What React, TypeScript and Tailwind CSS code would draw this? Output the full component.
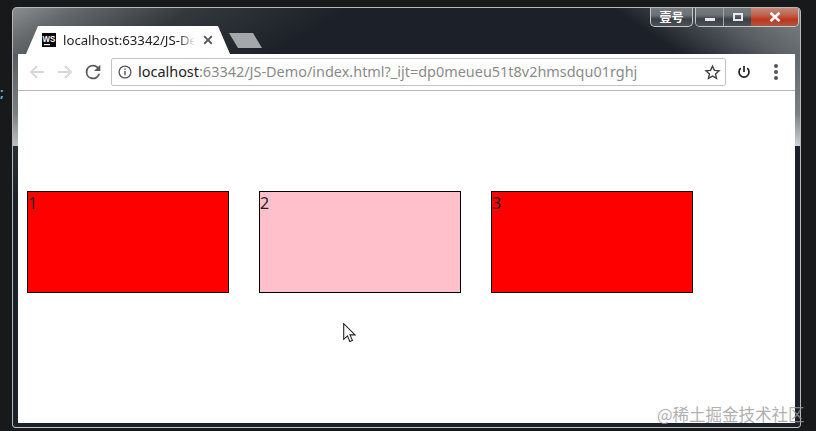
import React from "react";

function Box({ n, color }: { n: number; color: string }) {
  return (
    <div className={`w-[202px] h-[102px] border border-black text-[16px] leading-[22px] text-[#222] ${color}`}>
      {n}
    </div>
  );
}

export default function App() {
  return (
    <div className="relative w-[816px] h-[431px] overflow-hidden bg-[#17191a] pt-[7px] pl-[12px] font-['Noto_Sans',sans-serif]">
      <div className="absolute left-0 top-[85px] text-[#5fb4e6] text-[13px] leading-[14px] font-bold">;</div>

      <div className="relative flex flex-col w-[789px] h-[421px] rounded-t-[5px] rounded-b-[4px] border border-[#b4b8bb] border-b-[#c5c8ca] px-[5px] pb-[4px] overflow-hidden bg-[linear-gradient(150deg,#8a8e90_0px,#666a6d_30px,#33383d_90px,transparent_170px),linear-gradient(214deg,#7f8487_0px,#5a6064_50px,transparent_105px),linear-gradient(#1c2129,#1c2129)]">
        <div className="absolute left-0 top-[46px] w-[5px] h-[92px] bg-[linear-gradient(180deg,#585c5f_0%,#7c7f81_65%,#bfc1c2_100%)]" />
        <div className="absolute right-0 top-[46px] w-[5px] h-[92px] bg-[linear-gradient(180deg,#62676b_0%,#7c7f81_65%,#cfd1d2_100%)]" />

        {/* tab strip */}
        <div className="relative flex items-end h-[46px] shrink-0 pl-[8px]">
          <div className="flex items-center w-[204px] h-[28px] pl-[16px] gap-[7px] bg-white [clip-path:polygon(0_100%,12px_0,192px_0,100%_100%)]">
            <svg width="14" height="14" viewBox="0 0 14 14" className="shrink-0">
              <rect width="14" height="14" fill="#000" />
              <rect x="2" y="11" width="6" height="1.2" fill="#fff" />
              <text x="0.6" y="8.6" fontSize="8.4" fontWeight="700" fill="#fff" textLength="12.8" lengthAdjust="spacingAndGlyphs" fontFamily="Liberation Sans">WS</text>
            </svg>
            <div className="w-[132px] overflow-hidden whitespace-nowrap text-[13.2px] leading-[18px] text-[#222] [mask-image:linear-gradient(90deg,#000_88%,transparent)]">
              localhost:63342/JS-Demo
            </div>
            <svg width="10" height="10" viewBox="0 0 10 10" className="ml-[1px] shrink-0">
              <path d="M1.2 1.2 8.8 8.8M8.8 1.2 1.2 8.8" stroke="#555" strokeWidth="1.8" />
            </svg>
          </div>
          <div className="mb-[6px] ml-[-1px] w-[33px] h-[15px] bg-[#a5a8aa] [clip-path:polygon(0_0,24px_0,100%_100%,9px_100%)]" />
        </div>

        {/* toolbar */}
        <div className="relative flex items-center h-[37px] shrink-0 bg-white border-b border-[#b4b6b8] pl-[10px]">
          <svg width="18" height="18" viewBox="0 0 18 18" fill="none" stroke="#d8d8d8" strokeWidth="1.8">
            <path d="M16 9H3M9 3 3 9l6 6" />
          </svg>
          <svg width="18" height="18" viewBox="0 0 18 18" fill="none" stroke="#d8d8d8" strokeWidth="1.8" className="ml-[10px]">
            <path d="M2 9h13M9 3l6 6-6 6" />
          </svg>
          <svg width="22" height="22" viewBox="0 0 24 24" fill="#5a5a5a" className="ml-[8px]">
            <path d="M17.65 6.35A7.96 7.96 0 0 0 12 4a8 8 0 1 0 7.75 10h-2.08A6 6 0 1 1 12 6c1.66 0 3.14.69 4.22 1.78L13 11h7V4l-2.35 2.35z" />
          </svg>
          <div className="flex items-center ml-[7px] w-[615px] h-[28px] rounded-[2px] border border-[#c2c2c2] pl-[6px] pr-[4px]">
            <svg width="14" height="14" viewBox="0 0 14 14" fill="none" className="shrink-0">
              <circle cx="7" cy="7" r="5.9" stroke="#555" strokeWidth="1.3" />
              <rect x="6.3" y="6" width="1.4" height="4.2" fill="#555" />
              <rect x="6.3" y="3.6" width="1.4" height="1.4" fill="#555" />
            </svg>
            <div className="ml-[6px] whitespace-nowrap text-[14.45px] leading-[20px] text-[#8a8a8a]">
              <span className="text-[#222]">localhost</span>:63342/JS-Demo/index.html?_ijt=dp0meueu51t8v2hmsdqu01rghj
            </div>
            <svg width="17" height="17" viewBox="0 0 24 24" fill="none" stroke="#444" strokeWidth="2" className="ml-auto">
              <path d="M12 3l2.7 6 6.5.7-4.9 4.3 1.4 6.4L12 17.1 6.3 20.4l1.4-6.4-4.9-4.3 6.5-.7z" />
            </svg>
          </div>
          <svg width="14" height="14" viewBox="0 0 14 14" fill="none" stroke="#222" strokeWidth="1.7" className="ml-[11px]">
            <path d="M7 1v6" />
            <path d="M3.8 3.2a5 5 0 1 0 6.4 0" />
          </svg>
          <div className="ml-[23px] flex flex-col gap-[2.5px]">
            <span className="block w-[3.5px] h-[3.5px] rounded-full bg-[#555]" />
            <span className="block w-[3.5px] h-[3.5px] rounded-full bg-[#555]" />
            <span className="block w-[3.5px] h-[3.5px] rounded-full bg-[#555]" />
          </div>
        </div>

        {/* page */}
        <div className="relative flex-1 bg-white pt-[100px] pl-[9px]">
          <div className="flex gap-[30px]">
            <Box n={1} color="bg-[#ff0000]" />
            <Box n={2} color="bg-[#ffc0cb]" />
            <Box n={3} color="bg-[#ff0000]" />
          </div>
        </div>

        {/* window controls */}
        <div className="absolute top-0 right-[1px] flex gap-[2px] h-[19px]">
          <div className="flex items-center justify-center w-[43px] h-[19px] rounded-b-[5px] border border-t-0 border-[#c4c8ca] bg-[linear-gradient(180deg,#777c80_0%,#6a7074_40%,#3a4045_62%,#4c5256_100%)] text-[12px] leading-[14px] font-bold text-white font-['Noto_Sans_CJK_SC',sans-serif]">
            壹号
          </div>
          <div className="flex h-[19px] rounded-b-[5px] border border-t-0 border-[#c4c8ca] overflow-hidden">
            <div className="flex items-center justify-center w-[28px] border-r border-[#a0a5a8] bg-[linear-gradient(180deg,#777c80_0%,#6a7074_40%,#3a4045_62%,#4c5256_100%)]">
              <span className="block w-[10px] h-[3px] mt-[5px] bg-[#e8e8e8]" />
            </div>
            <div className="flex items-center justify-center w-[27px] bg-[linear-gradient(180deg,#777c80_0%,#6a7074_40%,#3a4045_62%,#4c5256_100%)]">
              <span className="block w-[10px] h-[8px] border-2 border-[#e8e8e8]" />
            </div>
            <div className="flex items-center justify-center w-[47px] bg-[linear-gradient(180deg,#c48a7c_0%,#c0604a_40%,#c2341a_65%,#a85a48_100%)]">
              <svg width="12" height="10" viewBox="0 0 12 10">
                <path d="M1.5 .8 10.5 9.2M10.5 .8 1.5 9.2" stroke="#fff" strokeWidth="2.6" />
              </svg>
            </div>
          </div>
        </div>
      </div>

      {/* cursor */}
      <svg width="14" height="20" viewBox="0 0 14 20" className="absolute left-[343px] top-[323px]">
        <path d="M.7.7v15.6l3.7-3.4 2.4 5.6 2.6-1.1-2.4-5.5h5z" fill="#fff" stroke="#222" strokeWidth="1.1" />
      </svg>

      {/* watermark */}
      <div className="absolute left-[657px] top-[404px] whitespace-nowrap text-[16.5px] leading-[20px] text-[#9a9a9a]/80 font-['Noto_Sans_CJK_SC',sans-serif]">
        @稀土掘金技术社区
      </div>
    </div>
  );
}
